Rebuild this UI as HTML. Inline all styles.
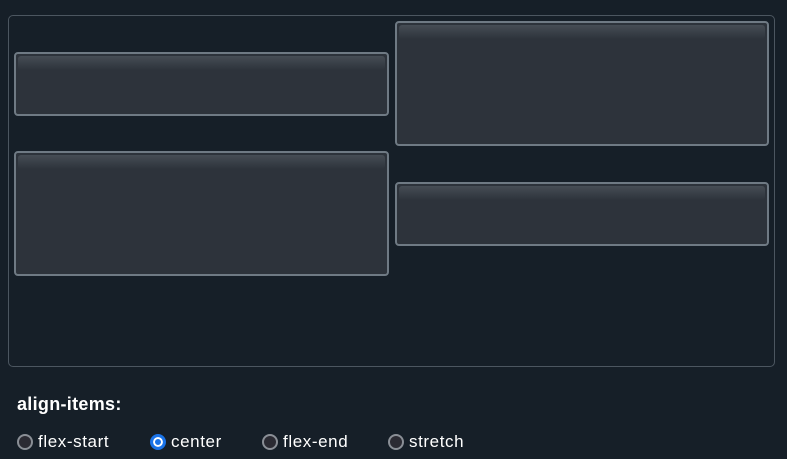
<!DOCTYPE html>
<html><head><style>
body{margin:0;width:787px;height:459px;background:#161f28;font-family:"Liberation Sans",sans-serif;color:#fff;position:relative;overflow:hidden}
.c{position:absolute;left:8px;top:15px;width:765px;height:350px;border:1px solid #4c5660;border-radius:5px}
.b{position:absolute;box-sizing:border-box;border:2px solid #6f7a84;border-radius:4px;background:#2d333b;overflow:hidden}
.b:before{content:"";position:absolute;left:2px;right:2px;top:2px;height:14px;border-radius:3px;background:linear-gradient(#464d55,#2d333b)}
.t{position:absolute;left:17px;top:394px;font-size:18px;font-weight:bold;letter-spacing:0.3px}
.r{position:absolute;top:434px;width:16px;height:16px;box-sizing:border-box;border-radius:50%;border:2px solid #8a8f96;background:#2b2b33}
.r.on{border:3px solid #1a73e8;background:#1a73e8;box-shadow:inset 0 0 0 2px #fff}
.l{position:absolute;top:432px;font-size:17px;letter-spacing:0.6px}
</style></head><body>
<div class="c"></div>
<div class="b" style="left:14px;top:52px;width:375px;height:64px"></div>
<div class="b" style="left:395px;top:21px;width:374px;height:125px"></div>
<div class="b" style="left:14px;top:151px;width:375px;height:125px"></div>
<div class="b" style="left:395px;top:182px;width:374px;height:64px"></div>
<div class="t">align-items:</div>
<div class="r" style="left:17px"></div><div class="l" style="left:38px">flex-start</div>
<div class="r on" style="left:150px"></div><div class="l" style="left:171px">center</div>
<div class="r" style="left:262px"></div><div class="l" style="left:283px">flex-end</div>
<div class="r" style="left:388px"></div><div class="l" style="left:409px">stretch</div>
</body></html>
